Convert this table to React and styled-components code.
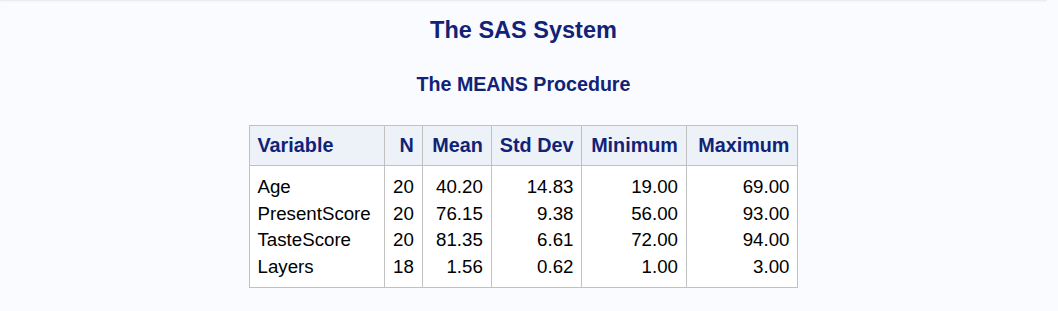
import React from "react";
import styled, { createGlobalStyle } from "styled-components";

const Global = createGlobalStyle`
  *, *::before, *::after { box-sizing: border-box; }
  html, body { margin: 0; padding: 0; background: #fafbfe; }
  body { font-family: "Liberation Sans", Arial, sans-serif; }
`;

const Page = styled.div`
  display: flex;
  width: 1058px;
  height: 311px;
  background: #fafbfe;
`;

const Panel = styled.main`
  width: 1047px;
  display: flex;
  flex-direction: column;
  align-items: center;
  padding-top: 16.5px;
  box-shadow: inset 0 2px 2px -1px #e6e7ea;
`;

const SystemTitle = styled.h1`
  margin: 0;
  font-size: 23.5px;
  line-height: 27px;
  font-weight: bold;
  color: #112277;
`;

const ProcTitle = styled.h2`
  margin: 29.7px 0 0;
  font-size: 19.65px;
  line-height: 23px;
  font-weight: bold;
  color: #112277;
`;

const Table = styled.table`
  margin-top: 29px;
  border-collapse: collapse;
  border: 1px solid #c1c1c1;
  background: #ffffff;
`;

const HeadCell = styled.th`
  width: ${(p) => p.$w}px;
  padding: 8px 8px;
  font-size: 19.8px;
  line-height: 23px;
  font-weight: bold;
  color: #112277;
  background: #edf2f9;
  border: 1px solid #c1c1c1;
  text-align: ${(p) => (p.$left ? "left" : "right")};
  white-space: nowrap;
`;

const DataCell = styled.td`
  padding: ${(p) => (p.$first ? "7.8px" : "0")} 8px ${(p) => (p.$last ? "6.4px" : "0")};
  font-size: 18.7px;
  line-height: 26.7px;
  color: #000000;
  border-left: 1px solid #c1c1c1;
  border-right: 1px solid #c1c1c1;
  text-align: ${(p) => (p.$left ? "left" : "right")};
  white-space: nowrap;
`;

const columns = [
  { label: "Variable", w: 135.5, left: true },
  { label: "N", w: 37 },
  { label: "Mean", w: 69 },
  { label: "Std Dev", w: 90 },
  { label: "Minimum", w: 104.5 },
  { label: "Maximum", w: 111.5 },
];

const rows = [
  ["Age", "20", "40.20", "14.83", "19.00", "69.00"],
  ["PresentScore", "20", "76.15", "9.38", "56.00", "93.00"],
  ["TasteScore", "20", "81.35", "6.61", "72.00", "94.00"],
  ["Layers", "18", "1.56", "0.62", "1.00", "3.00"],
];

export default function App() {
  return (
    <>
      <Global />
      <Page>
        <Panel>
          <SystemTitle>The SAS System</SystemTitle>
          <ProcTitle>The MEANS Procedure</ProcTitle>
          <Table>
            <thead>
              <tr>
                {columns.map((c) => (
                  <HeadCell key={c.label} $w={c.w} $left={c.left} scope="col">
                    {c.label}
                  </HeadCell>
                ))}
              </tr>
            </thead>
            <tbody>
              {rows.map((r, i) => (
                <tr key={r[0]}>
                  {r.map((v, j) => (
                    <DataCell
                      key={j}
                      $left={j === 0}
                      $first={i === 0}
                      $last={i === rows.length - 1}
                    >
                      {v}
                    </DataCell>
                  ))}
                </tr>
              ))}
            </tbody>
          </Table>
        </Panel>
      </Page>
    </>
  );
}
